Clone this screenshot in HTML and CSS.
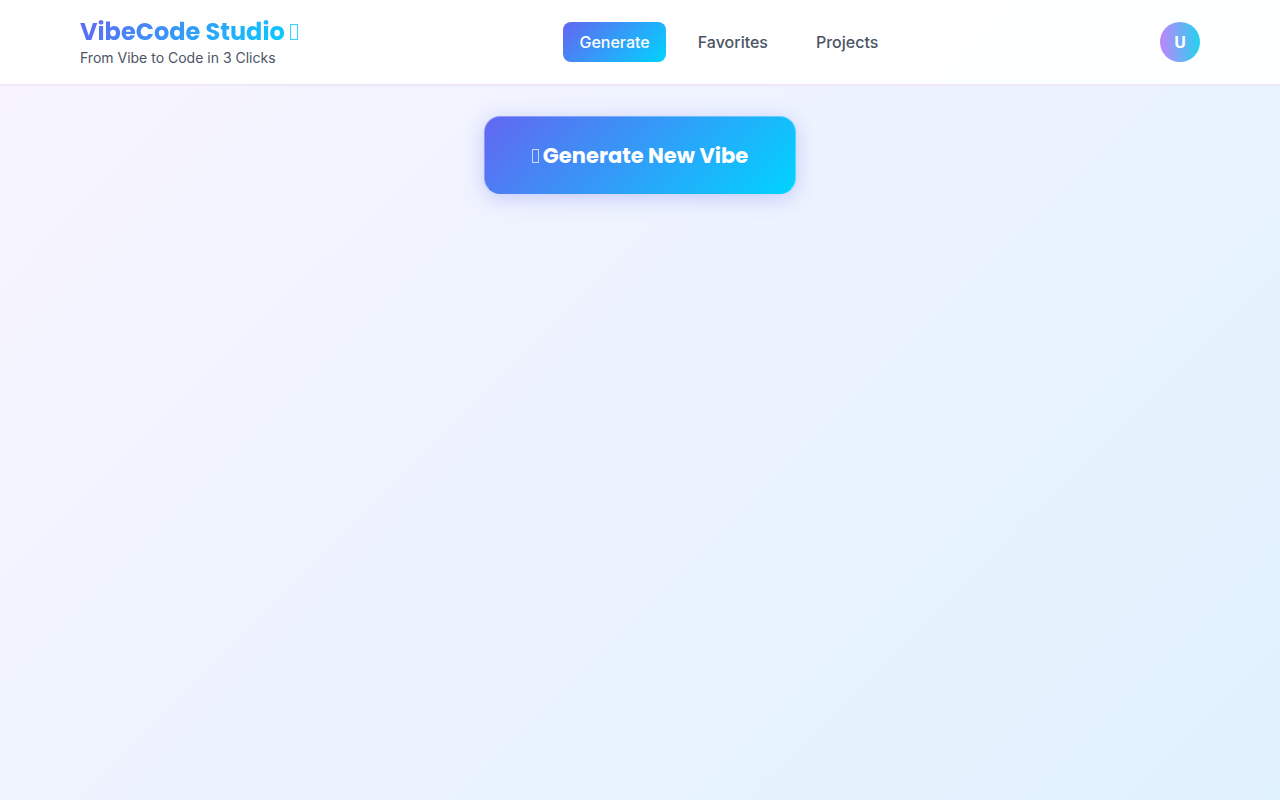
FILE: index.html
```html
<!DOCTYPE html>
<html lang="en">
<head>
    <meta charset="UTF-8">
    <meta name="viewport" content="width=device-width, initial-scale=1.0">
    <title>VibeCode Studio</title>
    <link rel="stylesheet" href="styles.css">
</head>
<body>
    <header class="header">
        <div class="header-content">
            <div class="brand">
                <h1 class="logo">VibeCode Studio <svg class="logo-icon" width="8" height="16" viewBox="0 0 8 16" aria-hidden="true"><rect x="0.5" y="0.5" width="7" height="15" fill="none" stroke="currentColor"/></svg></h1>
                <p class="tagline">From Vibe to Code in 3 Clicks</p>
            </div>
            <nav class="nav">
                <a href="#generate" class="nav-link active">Generate</a>
                <a href="#favorites" class="nav-link">Favorites</a>
                <a href="#projects" class="nav-link">Projects</a>
            </nav>
            <button type="button" class="avatar">U</button>
        </div>
    </header>

    <main class="main">
        <button type="button" class="generate-btn">
            <svg width="7" height="14" viewBox="0 0 7 14" aria-hidden="true"><rect x="0.5" y="0.5" width="6" height="13" fill="none" stroke="currentColor" stroke-opacity="0.7"/></svg>
            Generate New Vibe
        </button>
    </main>
</body>
</html>
```
FILE: styles.css
```css
* {
    margin: 0;
    padding: 0;
    box-sizing: border-box;
}
body {
    font-family: Inter, sans-serif;
    min-height: 100vh;
    color: #4b5563;
    background: linear-gradient(135deg, #f8f4ff 0%, #e0f2fe 100%);
}

/* Header */
.header {
    background: rgba(255, 255, 255, 0.9);
    border-bottom: 2px solid #f0e6fb;
}
.header-content {
    display: flex;
    justify-content: space-between;
    align-items: center;
    max-width: 1200px;
    margin: 0 auto;
    padding: 16px 40px;
}
.logo {
    font-family: Poppins, "Noto Sans", sans-serif;
    font-size: 24px;
    font-weight: 700;
    line-height: 32px;
    background: linear-gradient(135deg, #6366f1 0%, #00d4ff 100%);
    -webkit-background-clip: text;
    background-clip: text;
    color: transparent;
}
.logo-icon {
    color: #2fd4ff;
}
.tagline {
    font-size: 14px;
    line-height: 20px;
}
.nav {
    display: flex;
    gap: 16px;
}
.nav-link {
    padding: 8px 16px;
    border-radius: 8px;
    font-weight: 500;
    line-height: 24px;
    color: #4b5563;
    text-decoration: none;
}
.nav-link.active {
    color: white;
    background: linear-gradient(135deg, #6366f1 0%, #00d4ff 100%);
}
.avatar {
    width: 40px;
    height: 40px;
    border: none;
    border-radius: 50%;
    font-family: "Noto Sans", sans-serif;
    font-size: 16px;
    font-weight: 700;
    color: white;
    background: linear-gradient(90deg, #c084fc 0%, #22d3ee 100%);
    cursor: pointer;
}

/* Generate button */
.main {
    display: flex;
    justify-content: center;
    padding: 30px 40px;
}
.generate-btn {
    display: flex;
    align-items: center;
    gap: 4px;
    padding: 24px 47px 22px;
    border: 1px solid rgba(255, 255, 255, 0.3);
    border-bottom-color: transparent;
    border-radius: 16px;
    font-family: Poppins, "Noto Sans", sans-serif;
    font-size: 21px;
    font-weight: 700;
    line-height: 30px;
    color: white;
    background: linear-gradient(135deg, #6366f1 0%, #00d4ff 100%) border-box;
    box-shadow: 0 4px 20px rgba(99, 102, 241, 0.3);
    cursor: pointer;
}
```
